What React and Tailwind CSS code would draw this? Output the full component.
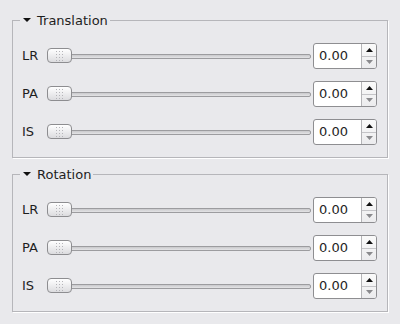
const rows = ["LR", "PA", "IS"];

function Slider() {
  return (
    <div className="relative flex-1 flex items-center h-[26px]">
      <div className="h-[5px] w-full rounded-[2px] border border-[#9c9c9f] bg-gradient-to-b from-[#c9c9cc] to-[#e4e4e6]" />
      <div className="absolute left-0 top-[5px] w-[25px] h-[15px] rounded-[4px] border border-[#8d8d90] bg-gradient-to-b from-[#ffffff] to-[#dcdcdf] flex items-center justify-center">
        <div className="grid grid-cols-3 gap-[2px]">
          {Array.from({ length: 12 }).map((_, i) => (
            <span key={i} className="block w-[1px] h-[1px] bg-[#b4b4b8]" />
          ))}
        </div>
      </div>
    </div>
  );
}

function SpinBox() {
  return (
    <div className="w-[64px] h-[26px] rounded-[3px] border border-[#8e8e91] bg-white flex overflow-hidden">
      <div className="flex-1 flex items-center pl-[5px] text-[13px] text-[#1e1e1e]">0.00</div>
      <div className="w-[15px] flex flex-col border-l border-[#b4b4b7] bg-gradient-to-b from-[#fafafa] to-[#ececee]">
        <div className="flex-1 flex items-center justify-center border-b border-[#c4c4c7]">
          <svg width="7" height="4" viewBox="0 0 7 4">
            <path d="M0 4 L3.5 0 L7 4 Z" fill="#111" />
          </svg>
        </div>
        <div className="flex-1 flex items-center justify-center">
          <svg width="7" height="4" viewBox="0 0 7 4">
            <path d="M0 0 L7 0 L3.5 4 Z" fill="#8a8a8d" />
          </svg>
        </div>
      </div>
    </div>
  );
}

function Group({ title, className = "" }) {
  return (
    <fieldset
      className={`border border-[#b6b6ba] shadow-[1px_1px_0_#ffffff] ${className}`}
    >
      <legend className="ml-[7px] px-[2px] h-[16px] flex items-center text-[13px] text-[#1e1e1e] leading-none">
        <svg width="8" height="4" viewBox="0 0 8 4" className="mx-[1px]">
          <path d="M0 0 L8 0 L4 4 Z" fill="#111" />
        </svg>
        <span className="ml-[5px]">{title}</span>
      </legend>
      <div className="flex flex-col gap-[12px] pt-[15px] pb-[12px] pl-[9px] pr-[10px]">
        {rows.map((r) => (
          <div key={r} className="flex items-center h-[26px]">
            <span className="w-[25px] text-[13px] text-[#1e1e1e]">{r}</span>
            <Slider />
            <div className="w-[2px]" />
            <SpinBox />
          </div>
        ))}
      </div>
    </fieldset>
  );
}

export default function App() {
  return (
    <div
      className="w-[400px] h-[324px] bg-[#e9e9ec] px-[12px] pt-[12px]"
      style={{ fontFamily: '"DejaVu Sans", sans-serif' }}
    >
      <Group title="Translation" />
      <Group title="Rotation" className="mt-[8px]" />
    </div>
  );
}
